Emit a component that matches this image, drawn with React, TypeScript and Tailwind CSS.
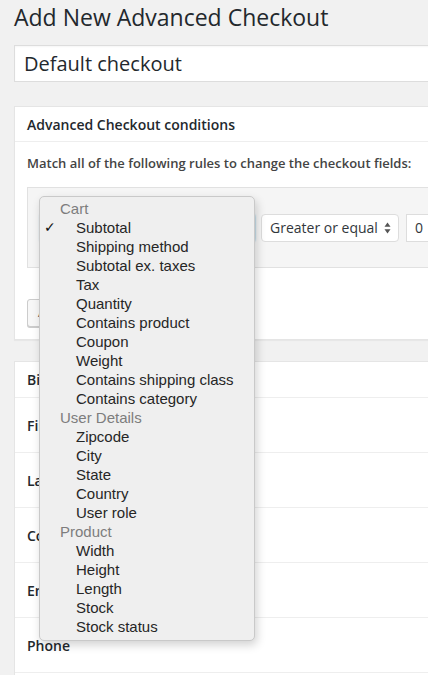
import React from "react";

const groups: { label: string; items: string[] }[] = [
  {
    label: "Cart",
    items: [
      "Subtotal",
      "Shipping method",
      "Subtotal ex. taxes",
      "Tax",
      "Quantity",
      "Contains product",
      "Coupon",
      "Weight",
      "Contains shipping class",
      "Contains category",
    ],
  },
  { label: "User Details", items: ["Zipcode", "City", "State", "Country", "User role"] },
  { label: "Product", items: ["Width", "Height", "Length", "Stock", "Stock status"] },
];

const rows = ["First name", "Last name", "Company", "Email", "Phone"];

export default function App() {
  return (
    <div className="relative w-[428px] h-[675px] overflow-hidden bg-[#f1f1f1] font-['Open_Sans',sans-serif] text-[#23282d]">
      <div className="pl-[14px]">
        <h1 className="h-[34px] leading-[34px] text-[23px] font-normal whitespace-nowrap">Add New Advanced Checkout</h1>
        <div className="mt-[11px] w-[520px] h-[37px] bg-white border border-[#dddddd] flex items-center pl-[9px] text-[20px] shadow-[inset_0_1px_2px_rgba(0,0,0,0.04)]">
          Default checkout
        </div>

        {/* Panel 1 */}
        <div className="mt-[24px] w-[520px] bg-white border border-[#e5e5e5] shadow-[0_1px_1px_rgba(0,0,0,0.04)]">
          <div className="h-[35px] border-b border-[#eeeeee] px-[12px] flex items-center text-[14px] font-semibold whitespace-nowrap">
            Advanced Checkout conditions
          </div>
          <div className="px-[12px] pb-[12px]">
            <div className="pt-[12px] h-[30px] leading-[18px] text-[13px] font-semibold text-[#444444] whitespace-nowrap">
              Match all of the following rules to change the checkout fields:
            </div>
            <div className="mt-[15px] h-[81px] bg-[#f5f5f5] border border-[#e1e1e1] flex items-center pl-[12px] gap-[6px]">
              <div className="w-[215px] h-[28px] bg-white border border-[#5b9dd9] rounded-[3px] shadow-[0_0_2px_rgba(30,140,190,0.8)]" />
              <div className="w-[138px] h-[28px] bg-white border border-[#dddddd] rounded-[4px] flex items-center justify-between pl-[8px] pr-[7px] text-[14px] text-[#32373c] whitespace-nowrap">
                <span>Greater or equal</span>
                <svg width="7" height="12" viewBox="0 0 7 12">
                  <path d="M3.5 0.5 L6.5 4.8 L0.5 4.8 Z" fill="#555" />
                  <path d="M3.5 11.5 L6.5 7.2 L0.5 7.2 Z" fill="#555" />
                </svg>
              </div>
              <div className="ml-[1px] w-[80px] h-[28px] bg-white border border-[#dddddd] flex items-center pl-[8px] text-[14px] text-[#32373c]">0</div>
            </div>
            <div className="mt-[31px] w-[100px] h-[28px] bg-[#f7f7f7] border border-[#cccccc] rounded-[3px] flex items-center pl-[10px] text-[13px] text-[#555] shadow-[0_1px_0_#ccc] whitespace-nowrap">
              Add rule
            </div>
          </div>
        </div>

        {/* Panel 2 */}
        <div className="mt-[21px] w-[520px] bg-white border border-[#e5e5e5]">
          <div className="h-[36px] border-b border-[#eeeeee] px-[12px] flex items-center text-[14px] font-semibold whitespace-nowrap">
            Billing fields
          </div>
          {rows.map((r) => (
            <div key={r} className="h-[55px] border-b border-[#eeeeee] px-[12px] flex items-center text-[14px] font-semibold whitespace-nowrap">
              {r}
            </div>
          ))}
          <div className="h-[55px]" />
        </div>
      </div>

      {/* Native dropdown overlay */}
      <div className="absolute left-[39px] top-[196px] w-[216px] h-[445px] rounded-[5px] bg-[#efefef] border border-[#c9c9c9] shadow-[2px_4px_10px_rgba(0,0,0,0.18)] pt-[2px] font-['Liberation_Sans',Arial,sans-serif] text-[15px]">
        {groups.map((g) => (
          <div key={g.label}>
            <div className="h-[19px] leading-[19px] pl-[20px] text-[#7d7d7d]">{g.label}</div>
            {g.items.map((it, i) => (
              <div key={it} className="relative h-[19px] leading-[19px] pl-[36px] text-[#262626] whitespace-nowrap">
                {g.label === "Cart" && i === 0 && (
                  <span className="absolute left-[4px] top-0 text-[14px] font-bold text-[#111] font-['DejaVu_Sans',sans-serif]">✓</span>
                )}
                {it}
              </div>
            ))}
          </div>
        ))}
      </div>
    </div>
  );
}
